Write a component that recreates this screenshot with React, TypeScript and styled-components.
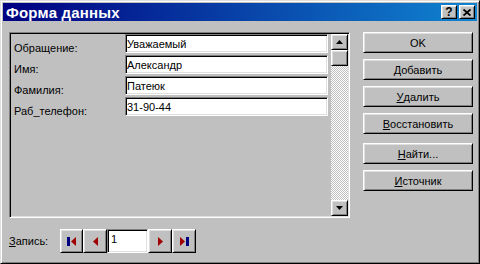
import styled, { createGlobalStyle } from 'styled-components'

const GlobalStyle = createGlobalStyle`
    body {
        margin: 0;
        background: #c0c0c0;
        font-family: 'Liberation Sans', Arial, sans-serif;
    }
`

const raised = `
    border: 1px solid;
    border-color: #fff #000 #000 #fff;
    box-shadow: inset 1px 1px #dfdfdf, inset -1px -1px #808080;
`

const sunken = `
    border: 1px solid;
    border-color: #808080 #fff #fff #808080;
    box-shadow: inset 1px 1px #000, inset -1px -1px #dfdfdf;
`

const fields = [
    { label: 'Обращение:', value: 'Уважаемый' },
    { label: 'Имя:', value: 'Александр' },
    { label: 'Фамилия:', value: 'Патеюк' },
    { label: 'Раб_телефон:', value: '31-90-44' },
]

const Arrow = ({ dir, color }: { dir: 'up' | 'down' | 'left' | 'right'; color: string }) => {
    const vertical = dir === 'up' || dir === 'down'
    const pts = {
        up: '3.5,0 7,4 0,4',
        down: '0,0 7,0 3.5,4',
        left: '5,0 5,9 0,4.5',
        right: '0,0 5,4.5 0,9',
    }[dir]
    return (
        <svg width={vertical ? 7 : 5} height={vertical ? 4 : 9} viewBox={vertical ? '0 0 7 4' : '0 0 5 9'}>
            <polygon points={pts} fill={color} />
        </svg>
    )
}

export default function App() {
    return (
        <>
            <GlobalStyle />
            <Window>
                <TitleBar>
                    <Title>Форма данных</Title>
                    <CaptionButtons>
                        <CaptionButton>?</CaptionButton>
                        <CaptionButton $gap>
                            <svg width="8" height="7" viewBox="0 0 8 7">
                                <path d="M0.5 0.5 L7.5 6.5 M7.5 0.5 L0.5 6.5" stroke="#000" strokeWidth="1.8" />
                            </svg>
                        </CaptionButton>
                    </CaptionButtons>
                </TitleBar>
                <Body>
                    <MainRow>
                        <Panel>
                            <FieldGrid>
                                {fields.map((f) => (
                                    <FieldRow key={f.label}>
                                        <Label>{f.label}</Label>
                                        <Field>{f.value}</Field>
                                    </FieldRow>
                                ))}
                            </FieldGrid>
                            <ScrollBar>
                                <ScrollButton>
                                    <Arrow dir="up" color="#000" />
                                </ScrollButton>
                                <Thumb />
                                <Track />
                                <ScrollButton>
                                    <Arrow dir="down" color="#000" />
                                </ScrollButton>
                            </ScrollBar>
                        </Panel>
                        <ButtonColumn>
                            <Button>OK</Button>
                            <Button>
                                <Mn>Д</Mn>обавить
                            </Button>
                            <Button>
                                <Mn>У</Mn>далить
                            </Button>
                            <Button>
                                <Mn>В</Mn>осстановить
                            </Button>
                            <Button $spaced>
                                <Mn>Н</Mn>айти...
                            </Button>
                            <Button>
                                <Mn>И</Mn>сточник
                            </Button>
                        </ButtonColumn>
                    </MainRow>
                    <Footer>
                        <FooterLabel>
                            <Mn>З</Mn>апись:
                        </FooterLabel>
                        <NavButton $w={23}>
                            <NavBar />
                            <Arrow dir="left" color="#a00000" />
                        </NavButton>
                        <NavButton $w={24}>
                            <Arrow dir="left" color="#a00000" />
                        </NavButton>
                        <RecordInput>1</RecordInput>
                        <NavButton $w={24}>
                            <Arrow dir="right" color="#a00000" />
                        </NavButton>
                        <NavButton $w={24}>
                            <Arrow dir="right" color="#a00000" />
                            <NavBar />
                        </NavButton>
                    </Footer>
                </Body>
            </Window>
        </>
    )
}

const Window = styled.div`
    width: 480px;
    height: 264px;
    box-sizing: border-box;
    background: #c0c0c0;
    border: 1px solid;
    border-color: #dfdfdf #000 #000 #dfdfdf;
    box-shadow: inset 1px 1px #fff, inset -1px -1px #808080;
    padding: 2px;
    display: flex;
    flex-direction: column;
`

const TitleBar = styled.div`
    height: 18px;
    display: flex;
    align-items: center;
    justify-content: space-between;
    padding: 0 2px 0 3px;
    background: linear-gradient(to right, #000080, #1084d0);
`

const Title = styled.span`
    color: #fff;
    font-weight: 700;
    font-size: 15px;
    letter-spacing: 0.2px;
`

const CaptionButtons = styled.div`
    display: flex;
`

const CaptionButton = styled.div<{ $gap?: boolean }>`
    ${raised}
    box-sizing: border-box;
    width: 16px;
    height: 14px;
    margin-left: ${(p) => (p.$gap ? '2px' : '0')};
    background: #c0c0c0;
    display: flex;
    align-items: center;
    justify-content: center;
    font-weight: 700;
    font-size: 12px;
    line-height: 12px;
    color: #000;
`

const Body = styled.div`
    flex: 1;
    padding: 11px 4px 0 6px;
    display: flex;
    flex-direction: column;
`

const MainRow = styled.div`
    display: flex;
    gap: 13px;
`

const Panel = styled.div`
    ${sunken}
    box-sizing: border-box;
    width: 341px;
    height: 186px;
    padding: 1px 1px 1px 4px;
    display: flex;
    gap: 2px;
`

const FieldGrid = styled.div`
    flex: 1;
    display: flex;
    flex-direction: column;
    gap: 2px;
`

const FieldRow = styled.div`
    display: grid;
    grid-template-columns: 111px 203px;
    height: 19px;
`

const Label = styled.div`
    display: flex;
    align-items: flex-end;
    font-size: 11px;
    line-height: 10px;
    color: #000;
`

const Field = styled.div`
    ${sunken}
    box-sizing: border-box;
    background: #fff;
    padding: 2px 0 0 1px;
    font-size: 11px;
    line-height: 14px;
    color: #000;
`

const ScrollBar = styled.div`
    width: 17px;
    display: flex;
    flex-direction: column;
`

const ScrollButton = styled.div`
    ${raised}
    box-sizing: border-box;
    height: 16px;
    background: #c0c0c0;
    display: flex;
    align-items: center;
    justify-content: center;
`

const Thumb = styled.div`
    ${raised}
    box-sizing: border-box;
    height: 16px;
    background: #c0c0c0;
`

const Track = styled.div`
    flex: 1;
    background-color: #fff;
    background-image: repeating-conic-gradient(#c0c0c0 0 25%, #fff 0 50%);
    background-size: 2px 2px;
`

const ButtonColumn = styled.div`
    display: flex;
    flex-direction: column;
    gap: 6px;
`

const Button = styled.div<{ $spaced?: boolean }>`
    ${raised}
    box-sizing: border-box;
    width: 110px;
    height: 21px;
    margin-top: ${(p) => (p.$spaced ? '3px' : '0')};
    background: #c0c0c0;
    display: flex;
    align-items: center;
    justify-content: center;
    font-size: 11px;
    color: #000;
`

const Mn = styled.span`
    text-decoration: underline;
`

const Footer = styled.div`
    margin-top: 11px;
    display: flex;
    align-items: center;
    height: 24px;
`

const FooterLabel = styled.div`
    width: 51px;
    font-size: 11px;
    color: #000;
`

const NavButton = styled.div<{ $w: number }>`
    ${raised}
    box-sizing: border-box;
    width: ${(p) => p.$w}px;
    height: 24px;
    background: #c0c0c0;
    display: flex;
    align-items: center;
    justify-content: center;
    gap: 1px;
`

const NavBar = styled.div`
    width: 3px;
    height: 9px;
    background: #000080;
`

const RecordInput = styled.div`
    ${sunken}
    box-sizing: border-box;
    width: 41px;
    height: 24px;
    background: #fff;
    padding: 2px 0 0 3px;
    font-size: 11px;
    line-height: 14px;
    color: #000;
`
